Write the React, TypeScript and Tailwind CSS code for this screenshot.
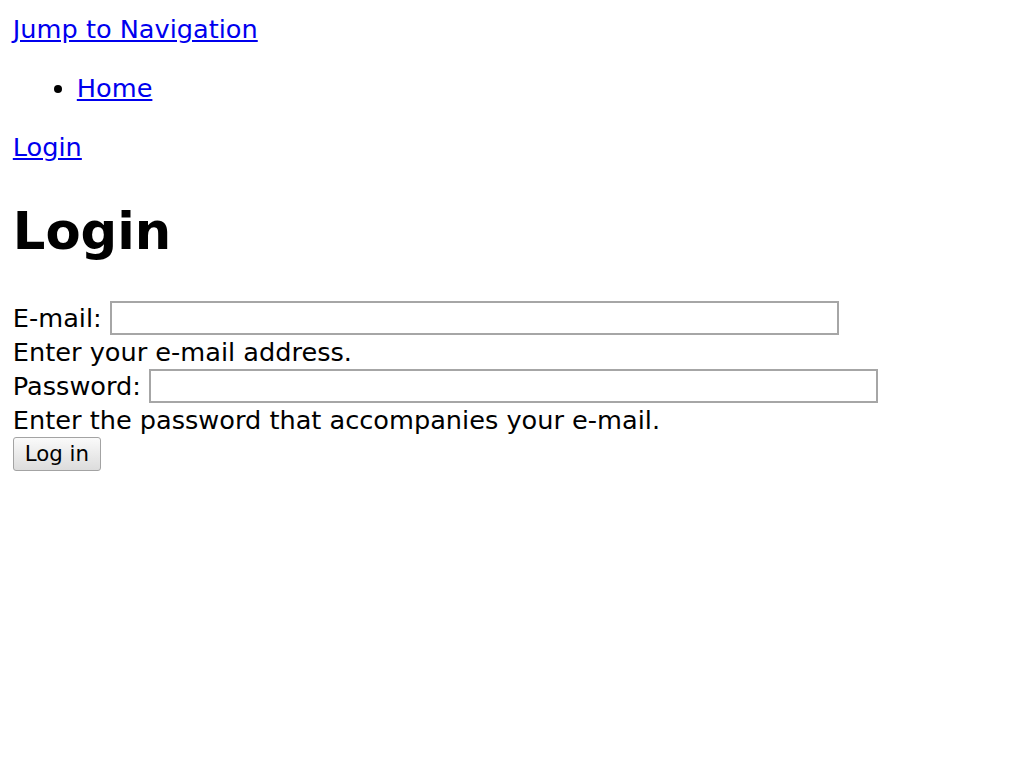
import React from 'react';

export default function App() {
  return (
    <div className="min-h-screen bg-white px-[12.8px] pt-[12px] font-['DejaVu_Sans',sans-serif] text-[25.6px] leading-[34px] text-black">
      {/* Skip link */}
      <div>
        <a href="#nav" className="text-[#0000ee] underline">Jump to Navigation</a>
      </div>

      {/* Breadcrumb */}
      <ul className="my-[25.2px] list-disc pl-[64px]">
        <li>
          <a href="#" className="text-[#0000ee] underline">Home</a>
        </li>
      </ul>

      <p className="my-[25.2px]">
        <a href="#" className="text-[#0000ee] underline">Login</a>
      </p>

      <h1 className="mt-[33.6px] mb-[37px] text-[51.2px] font-bold leading-[66px]">Login</h1>

      {/* Login form */}
      <form onSubmit={(e) => e.preventDefault()}>
        <div className="flex h-[34px] items-center gap-[8.2px]">
          <label htmlFor="edit-name">E-mail:</label>
          <input
            id="edit-name"
            type="text"
            className="h-[34px] w-[729px] border-2 border-[#a6a6a6] bg-white px-1 text-[21px] outline-none"
          />
        </div>
        <div className="h-[34px]">Enter your e-mail address.</div>

        <div className="flex h-[34px] items-center gap-[8.2px]">
          <label htmlFor="edit-pass">Password:</label>
          <input
            id="edit-pass"
            type="password"
            className="h-[34px] w-[729px] border-2 border-[#a6a6a6] bg-white px-1 text-[21px] outline-none"
          />
        </div>
        <div className="h-[34px]">Enter the password that accompanies your e-mail.</div>

        <div className="flex h-[34px] items-center">
          <button
            type="submit"
            className="h-[34px] w-[88px] rounded-[3px] border border-[#a3a3a3] bg-gradient-to-b from-[#fafafa] to-[#dcdcdc] text-[21.3px] leading-none text-black"
          >
            Log in
          </button>
        </div>
      </form>
    </div>
  );
}
